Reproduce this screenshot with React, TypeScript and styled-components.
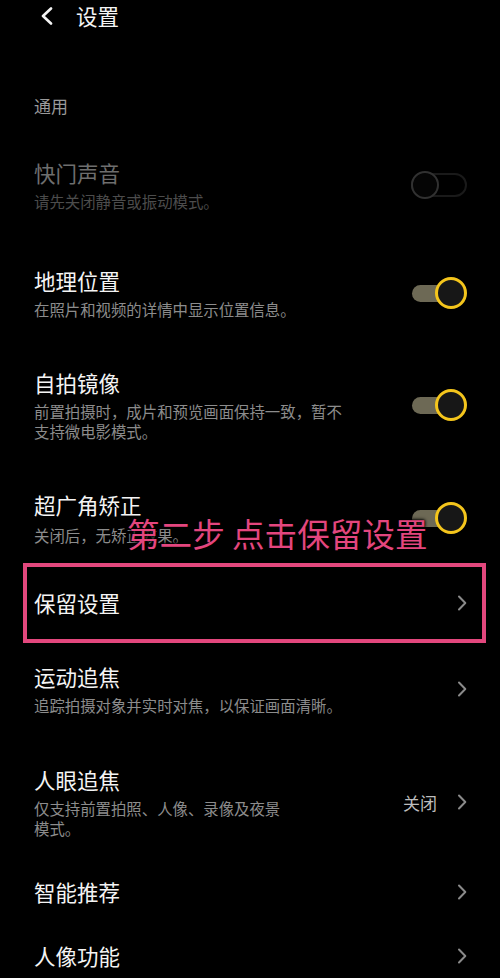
import styled, { createGlobalStyle } from "styled-components";

const GlobalStyle = createGlobalStyle`
  html, body {
    margin: 0;
    padding: 0;
    background: #000;
  }
  body {
    font-family: "Noto Sans CJK SC", "Noto Sans", sans-serif;
    color: #f0f0f0;
  }
`;

const Page = styled.div`
  position: relative;
  width: 500px;
  min-height: 978px;
  overflow: hidden;
  background: #000;
`;

const Header = styled.div`
  display: flex;
  align-items: center;
  gap: 23px;
  height: 32px;
  padding-left: 40px;
`;

const HeaderTitle = styled.div`
  font-size: 21.5px;
  font-weight: 400;
  color: #f4f4f4;
  line-height: 32px;
`;

const SectionLabel = styled.div`
  margin: 62px 0 15px 34px;
  font-size: 17px;
  line-height: 24px;
  color: #9a9a9a;
`;

const Row = styled.div<{ $pt: number; $pb: number }>`
  display: flex;
  align-items: center;
  justify-content: space-between;
  padding: ${(p) => p.$pt}px 33px ${(p) => p.$pb}px 34px;
`;

const HighlightRow = styled(Row)`
  margin: 0 14px 0 23px;
  padding-left: 7px;
  padding-right: 15px;
  border: 4px solid #e2477d;
`;

const TextBlock = styled.div`
  display: flex;
  flex-direction: column;
  max-width: 316px;
`;

const Title = styled.div<{ $dim?: boolean }>`
  font-size: 21.5px;
  line-height: 28px;
  font-weight: 400;
  color: ${(p) => (p.$dim ? "#6e6e6e" : "#f4f4f4")};
`;

const Sub = styled.div<{ $dim?: boolean; $gap?: number; $narrow?: boolean }>`
  margin-top: ${(p) => p.$gap ?? 4}px;
  font-size: 15.4px;
  line-height: 20px;
  color: ${(p) => (p.$dim ? "#4c4c4c" : "#8c8c8c")};
  max-width: ${(p) => (p.$narrow ? "260px" : "316px")};
`;

const Trailing = styled.div`
  display: flex;
  align-items: center;
  gap: 20px;
`;

const Value = styled.span`
  font-size: 17px;
  color: #bdbdbd;
`;

const SwitchBox = styled.div<{ $on: boolean }>`
  position: relative;
  flex-shrink: 0;
  width: ${(p) => (p.$on ? 55 : 56)}px;
  height: ${(p) => (p.$on ? 32 : 28)}px;
`;

const Track = styled.div<{ $on: boolean }>`
  position: absolute;
  left: 0;
  box-sizing: border-box;
  ${(p) =>
    p.$on
      ? `top: 7.5px; width: 40px; height: 17px; border-radius: 9px; background: #6d6955;`
      : `top: 2px; width: 56px; height: 24px; border-radius: 12px; border: 2px solid #1a1a1a;`}
`;

const Knob = styled.div<{ $on: boolean }>`
  position: absolute;
  top: 0;
  box-sizing: border-box;
  border-radius: 50%;
  ${(p) =>
    p.$on
      ? `right: 0; width: 32px; height: 32px; border: 3.5px solid #f4c51c; background: #171717;`
      : `left: 0; width: 28px; height: 28px; border: 2.5px solid #313131; background: #050505;`}
`;

const Annotation = styled.div`
  position: absolute;
  left: 127px;
  top: 513px;
  font-size: 32.6px;
  line-height: 40px;
  color: #e3467e;
  white-space: nowrap;
  text-shadow: 0 0 2px #000, 0 0 3px #000, 0 0 4px #000;
`;

const Switch = ({ on }: { on: boolean }) => (
  <SwitchBox $on={on}>
    <Track $on={on} />
    <Knob $on={on} />
  </SwitchBox>
);

const Chevron = () => (
  <svg width="10" height="16" viewBox="0 0 10 16" fill="none">
    <path d="M2 1.5 L8.3 8 L2 14.5" stroke="#8a8a8a" strokeWidth="2" strokeLinecap="round" strokeLinejoin="round" />
  </svg>
);

const BackIcon = () => (
  <svg width="13" height="18" viewBox="0 0 13 18" fill="none">
    <path d="M11 1.5 L3 9 L11 16.5" stroke="#f4f4f4" strokeWidth="2.6" strokeLinecap="round" strokeLinejoin="round" />
  </svg>
);

export default function App() {
  return (
    <Page>
      <GlobalStyle />
      <Header>
        <BackIcon />
        <HeaderTitle>设置</HeaderTitle>
      </Header>

      <SectionLabel>通用</SectionLabel>

      <Row $pt={26} $pb={26}>
        <TextBlock>
          <Title $dim>快门声音</Title>
          <Sub $dim>请先关闭静音或振动模式。</Sub>
        </TextBlock>
        <Switch on={false} />
      </Row>

      <Row $pt={30} $pb={24}>
        <TextBlock>
          <Title>地理位置</Title>
          <Sub>在照片和视频的详情中显示位置信息。</Sub>
        </TextBlock>
        <Switch on />
      </Row>

      <Row $pt={26} $pb={24}>
        <TextBlock>
          <Title>自拍镜像</Title>
          <Sub>前置拍摄时，成片和预览画面保持一致，暂不支持微电影模式。</Sub>
        </TextBlock>
        <Switch on />
      </Row>

      <Row $pt={26} $pb={18}>
        <TextBlock>
          <Title>超广角矫正</Title>
          <Sub $gap={6}>关闭后，无矫正效果。</Sub>
        </TextBlock>
        <Switch on />
      </Row>

      <HighlightRow $pt={22} $pb={22}>
        <Title>保留设置</Title>
        <Chevron />
      </HighlightRow>

      <Row $pt={20} $pb={26}>
        <TextBlock>
          <Title>运动追焦</Title>
          <Sub>追踪拍摄对象并实时对焦，以保证画面清晰。</Sub>
        </TextBlock>
        <Chevron />
      </Row>

      <Row $pt={25} $pb={22}>
        <TextBlock>
          <Title>人眼追焦</Title>
          <Sub $narrow>仅支持前置拍照、人像、录像及夜景模式。</Sub>
        </TextBlock>
        <Trailing>
          <Value>关闭</Value>
          <Chevron />
        </Trailing>
      </Row>

      <Row $pt={18} $pb={18}>
        <Title>智能推荐</Title>
        <Chevron />
      </Row>

      <Row $pt={18} $pb={18}>
        <Title>人像功能</Title>
        <Chevron />
      </Row>

      <Annotation>第二步 点击保留设置</Annotation>
    </Page>
  );
}
